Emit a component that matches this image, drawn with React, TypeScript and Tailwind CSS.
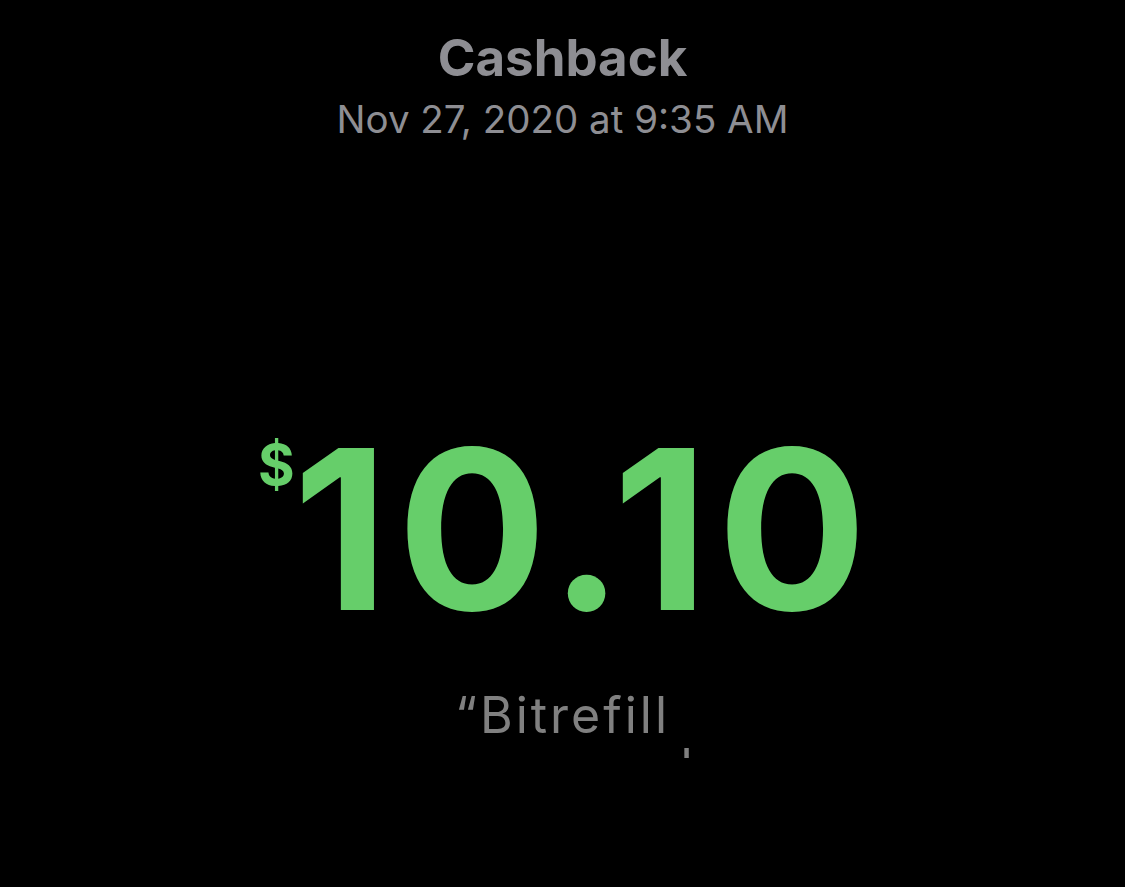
import React from 'react';

export default function App() {
  return (
    <div
      className="w-[1125px] h-[887px] bg-black overflow-hidden flex flex-col items-center"
      style={{ fontFamily: 'Inter, "Noto Sans", sans-serif' }}
    >
      {/* Header */}
      <h1 className="mt-[28px] text-[51px] leading-[60px] font-bold text-[#8e8e93]">Cashback</h1>
      <p className="mt-[7px] text-[38.5px] leading-[48px] text-[#8e8e93]">Nov 27, 2020 at 9:35 AM</p>

      {/* Amount */}
      <div className="mt-[267px] h-[240px] flex items-start text-[#66ce6a] font-bold">
        <span className="text-[56px] leading-[60px] mt-[25px] -mr-[2px]">$</span>
        <span className="text-[222px] leading-[240px] tracking-[9px] -mr-[9px]">10.10</span>
      </div>

      {/* Memo, clipped */}
      <div className="mt-[39px] h-[69px] overflow-hidden w-[900px] text-center">
        <p className="text-[50px] leading-[52px] tracking-[3px] text-[#808080]">
          “Bitrefill
          <br />
          ocean cards
        </p>
      </div>
    </div>
  );
}
